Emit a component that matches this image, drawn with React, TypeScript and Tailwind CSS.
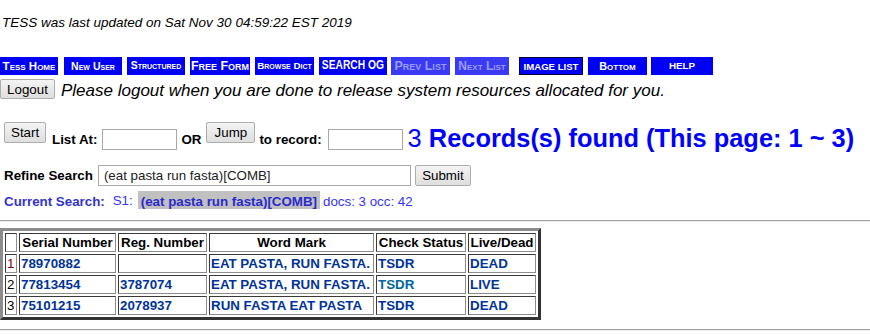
import React from 'react';

type NavItem = { label: string; box: string; text: string };

// image-style nav buttons along the top
const navItems: NavItem[] = [
  { label: 'Tess Home', box: 'ml-0 w-[58px] bg-[#0000f5] items-center', text: 'text-[11.5px] [font-variant:small-caps] text-white' },
  { label: 'New User', box: 'ml-[6px] w-[58px] bg-[#0000f5] items-center', text: 'text-[10.5px] [font-variant:small-caps] text-white' },
  { label: 'Structured', box: 'ml-[5px] w-[58px] bg-[#0000f5] items-center', text: 'text-[10.4px] [font-variant:small-caps] text-white' },
  { label: 'Free Form', box: 'ml-[5px] w-[60px] bg-[#0000f5] items-center', text: 'text-[12.4px] [font-variant:small-caps] text-white' },
  { label: 'Browse Dict', box: 'ml-[5px] w-[59px] bg-[#0000f5] items-center', text: 'text-[9.8px] [font-variant:small-caps] text-white' },
  { label: 'SEARCH OG', box: 'ml-[5px] w-[68px] bg-[#0000f5] items-start pt-[1px]', text: 'inline-block text-[12.5px] scale-x-[0.82] text-white' },
  { label: 'Prev List', box: 'ml-[4px] w-[59px] bg-[#3a3af2] items-center', text: 'text-[12.4px] [font-variant:small-caps] text-[#9c9cff]' },
  { label: 'Next List', box: 'ml-[5px] w-[54px] bg-[#3a3af2] items-center', text: 'text-[12px] [font-variant:small-caps] text-[#9c9cff]' },
  { label: 'IMAGE LIST', box: 'ml-[10px] w-[64px] bg-[#0000f5] border border-[#000033] items-start pt-[2px]', text: 'text-[9.6px] text-white' },
  { label: 'Bottom', box: 'ml-[5px] w-[59px] bg-[#0000f5] items-center', text: 'text-[10.8px] [font-variant:small-caps] text-white' },
  { label: 'HELP', box: 'ml-[4px] w-[62px] bg-[#0000f5] items-center', text: 'text-[9.8px] text-white' },
];

const rows = [
  { n: '1', nColor: 'text-[#880000]', serial: '78970882', reg: '', mark: 'EAT PASTA, RUN FASTA.', tsdr: 'text-[#003399]', status: 'DEAD' },
  { n: '2', nColor: 'text-black', serial: '77813454', reg: '3787074', mark: 'EAT PASTA, RUN FASTA.', tsdr: 'text-[#006699]', status: 'LIVE' },
  { n: '3', nColor: 'text-black', serial: '75101215', reg: '2078937', mark: 'RUN FASTA EAT PASTA', tsdr: 'text-[#003399]', status: 'DEAD' },
];

const btn =
  'h-[21px] px-[6px] border border-[#adadad] rounded-[2px] bg-linear-to-b from-[#f4f4f4] to-[#dedede] text-[13.33px] leading-[15px] text-black';

const cell =
  'border border-t-[#3a3a3a] border-l-[#3a3a3a] border-r-[#8c8c8c] border-b-[#8c8c8c] px-[1px] py-[1px] h-[19px] leading-[15px]';

export default function App() {
  return (
    <div className="w-[870px] h-[335px] overflow-hidden bg-white text-black font-['Liberation_Sans',Arial,sans-serif]">
      <p className="pt-[15px] ml-[2px] text-[13.5px] leading-[15px] italic">
        TESS was last updated on Sat Nov 30 04:59:22 EST 2019
      </p>

      {/* nav images */}
      <div className="mt-[27px] flex h-[18px]">
        {navItems.map((item) => (
          <div key={item.label} className={`flex h-[18px] justify-center overflow-hidden ${item.box}`}>
            <span className={`font-bold leading-[14px] whitespace-nowrap ${item.text}`}>{item.label}</span>
          </div>
        ))}
      </div>

      <div className="mt-[4px] flex items-start">
        <button className="h-[20px] w-[55px] border border-[#adadad] rounded-[2px] bg-linear-to-b from-[#f4f4f4] to-[#dedede] text-[13.33px] leading-[15px]">
          Logout
        </button>
        <span className="ml-[6px] mt-[2px] text-[17px] leading-[19px] italic">
          Please logout when you are done to release system resources allocated for you.
        </span>
      </div>

      {/* list-at row */}
      <div className="mt-[22px] flex items-start h-[31px] text-[13.33px] leading-[15px]">
        <button className={`ml-[4px] w-[42px] ${btn}`}>Start</button>
        <b className="ml-[6px] mt-[10px]">List At:</b>
        <input className="ml-[5px] mt-[7px] h-[21px] w-[75px] border border-[#a9a9a9] bg-white" />
        <b className="ml-[4px] mt-[10px]">OR</b>
        <button className={`ml-[5px] w-[49px] ${btn}`}>Jump</button>
        <b className="ml-[4px] mt-[10px]">to record:</b>
        <input className="ml-[6px] mt-[7px] h-[21px] w-[75px] border border-[#a9a9a9] bg-white" />
        <span className="ml-[5px] mt-[2px] text-[25.4px] leading-[29px] text-[#0000ff] whitespace-nowrap">
          3 <b>Records(s) found (This page: 1 ~ 3)</b>
        </span>
      </div>

      {/* refine row */}
      <div className="mt-[12px] flex items-start text-[13.33px] leading-[15px]">
        <b className="ml-[4px] mt-[3px]">Refine Search</b>
        <input
          defaultValue="(eat pasta run fasta)[COMB]"
          className="ml-[5px] h-[21px] w-[313px] border border-[#a9a9a9] bg-white px-[5px] text-[13.33px] text-[#222222]"
        />
        <button className={`ml-[4px] w-[56px] ${btn}`}>Submit</button>
      </div>

      {/* current search */}
      <div className="mt-[5px] flex items-start h-[18px] text-[13.33px] leading-[15px]">
        <b className="ml-[4px] mt-[3px] text-[#3333cc]">Current Search:</b>
        <span className="ml-[8px] mt-[2px] text-[#3333ff]">S1:</span>
        <b className="ml-[5px] h-[18px] bg-[#c0c0c0] px-[3px] pt-[3px] text-[#2a2acc]">(eat pasta run fasta)[COMB]</b>
        <span className="ml-[3px] mt-[3px] text-[#3333ff]">docs: 3 occ: 42</span>
      </div>

      <div className="mt-[11px] h-[2px] border-t border-t-[#a0a0a0] border-b border-b-[#eeeeee]" />

      {/* results table */}
      <table className="mt-[6px] border-separate border-spacing-[2px] border-[3px] border-t-[#8c8c8c] border-l-[#8c8c8c] border-r-[#333333] border-b-[#333333] text-[13.33px]">
        <thead>
          <tr className="font-bold">
            <th className={`${cell} w-[12px]`}></th>
            <th className={`${cell} w-[97px]`}>Serial Number</th>
            <th className={`${cell} w-[89px]`}>Reg. Number</th>
            <th className={`${cell} w-[165px]`}>Word Mark</th>
            <th className={`${cell} w-[90px]`}>Check Status</th>
            <th className={`${cell} w-[68px]`}>Live/Dead</th>
          </tr>
        </thead>
        <tbody>
          {rows.map((r) => (
            <tr key={r.n}>
              <td className={`${cell} ${r.nColor}`}>{r.n}</td>
              <td className={`${cell} font-bold text-[#003399]`}>{r.serial}</td>
              <td className={`${cell} font-bold text-[#003399]`}>{r.reg}</td>
              <td className={`${cell} font-bold text-[#003399] whitespace-nowrap`}>{r.mark}</td>
              <td className={`${cell} font-bold ${r.tsdr}`}>TSDR</td>
              <td className={`${cell} font-bold text-[#003399]`}>{r.status}</td>
            </tr>
          ))}
        </tbody>
      </table>

      <div className="mt-[9px] h-[2px] border-t border-t-[#a0a0a0] border-b border-b-[#eeeeee]" />
    </div>
  );
}
